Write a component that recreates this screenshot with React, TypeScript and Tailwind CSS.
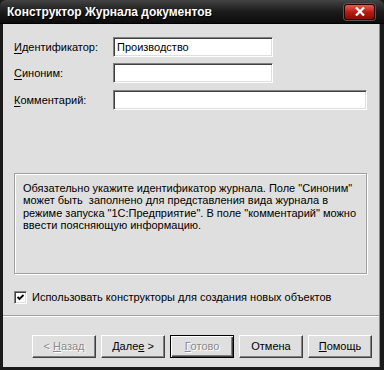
import React from "react";

const font = { fontFamily: '"Liberation Sans", Arial, sans-serif' };

function Field({
  acc,
  rest,
  value,
  width,
}: {
  acc: string;
  rest: string;
  value?: string;
  width: string;
}) {
  return (
    <div className="flex items-center h-[20px]">
      <div className="w-[99px] ml-[11px] text-[11px] text-black leading-none" style={font}>
        <span className="underline underline-offset-2">{acc}</span>
        {rest}
      </div>
      <div
        className={`${width} h-[20px] bg-white border border-t-[#808080] border-l-[#808080] border-b-white border-r-white shadow-[inset_1px_1px_0_#404040,inset_-1px_-1px_0_#dfdfdf] flex items-center pl-[3px] text-[11px] text-black`}
        style={font}
      >
        {value}
      </div>
    </div>
  );
}

function Btn({
  children,
  disabled,
  def,
}: {
  children: React.ReactNode;
  disabled?: boolean;
  def?: boolean;
}) {
  return (
    <div
      className={`w-[64px] h-[23px] flex items-center justify-center bg-[#dfdfdf] text-[11px] font-normal ${
        def
          ? "border border-black shadow-[inset_1px_1px_0_#fff,inset_-1px_-1px_0_#404040,inset_-2px_-2px_0_#808080]"
          : "border border-t-white border-l-white border-b-[#404040] border-r-[#404040] shadow-[inset_-1px_-1px_0_#808080]"
      } ${disabled ? "text-[#8a8a8a] [text-shadow:1px_1px_0_#fff]" : "text-black"}`}
      style={font}
    >
      {children}
    </div>
  );
}

export default function App() {
  return (
    <div className="w-[384px] h-[370px] flex flex-col bg-[#1a1a1a] overflow-hidden">
      {/* Title bar */}
      <div className="h-[24px] flex items-center justify-between rounded-t-[6px] bg-gradient-to-b from-[#444444] via-[#1c1c1c] to-[#0c0c0c] border-b border-[#000]">
        <div
          className="pl-[7px] text-white font-bold text-[12px] [text-shadow:1px_1px_1px_#000]"
          style={font}
        >
          Конструктор Журнала документов
        </div>
        <div className="mr-[9px] w-[31px] h-[16px] rounded-[3px] border border-[#2a0000] bg-gradient-to-b from-[#e25a4a] via-[#b81c12] to-[#8c0c06] shadow-[0_0_0_1px_#555] flex items-center justify-center">
          <svg width="10" height="9" viewBox="0 0 10 9">
            <path d="M1 0.5 L9 8.5 M9 0.5 L1 8.5" stroke="#fff" strokeWidth="2.2" />
          </svg>
        </div>
      </div>

      <div className="flex flex-1">
        <div className="w-[3px] bg-[#1a1a1a]" />
        <div className="flex-1 bg-[#dfdfdf] flex flex-col">
          <div className="mt-[13px]">
            <Field acc="И" rest="дентификатор:" value="Производство" width="w-[160px]" />
          </div>
          <div className="mt-[6px]">
            <Field acc="С" rest="иноним:" width="w-[160px]" />
          </div>
          <div className="mt-[7px]">
            <Field acc="К" rest="омментарий:" width="w-[254px]" />
          </div>

          {/* Info box */}
          <div className="mt-[63px] ml-[11px] w-[353px] h-[101px] border border-[#a0a0a0] shadow-[inset_1px_1px_0_#fff,1px_1px_0_#fff] pt-[8px] pl-[8px] pr-[4px]">
            <p className="text-[11px] leading-[12.3px] text-black" style={font}>
              Обязательно укажите идентификатор журнала. Поле "Синоним" может быть&nbsp; заполнено для представления вида журнала в режиме запуска "1С:Предприятие". В поле "комментарий" можно ввести поясняющую информацию.
            </p>
          </div>

          {/* Checkbox */}
          <div className="mt-[17px] ml-[11px] flex items-center h-[13px]">
            <div className="w-[13px] h-[13px] bg-white border border-t-[#808080] border-l-[#808080] border-b-white border-r-white shadow-[inset_1px_1px_0_#404040,inset_-1px_-1px_0_#dfdfdf] flex items-center justify-center">
              <svg width="9" height="9" viewBox="0 0 9 9">
                <path d="M1.5 4 L3.5 6 L7.5 2" stroke="#000" strokeWidth="1.8" fill="none" />
              </svg>
            </div>
            <span className="ml-[5px] text-[11px] text-black" style={font}>
              Использовать конструкторы для создания новых объектов
            </span>
          </div>

          {/* Separator */}
          <div className="mt-[11px] h-[2px] border-t border-[#a0a0a0] border-b border-b-white" />

          {/* Buttons */}
          <div className="mt-[18px] ml-[29px] flex gap-[5px]">
            <Btn disabled>
              &lt;&nbsp;<span className="underline">Н</span>азад
            </Btn>
            <Btn>
              Дале<span className="underline">е</span>&nbsp;&gt;
            </Btn>
            <Btn disabled def>
              <span className="underline">Г</span>отово
            </Btn>
            <Btn>Отмена</Btn>
            <Btn>
              <span className="underline">П</span>омощь
            </Btn>
          </div>
        </div>
        <div className="w-[5px] bg-[#1a1a1a] border-l border-[#8a8a8a]" />
      </div>
      <div className="h-[3px] bg-[#1a1a1a]" />
    </div>
  );
}
